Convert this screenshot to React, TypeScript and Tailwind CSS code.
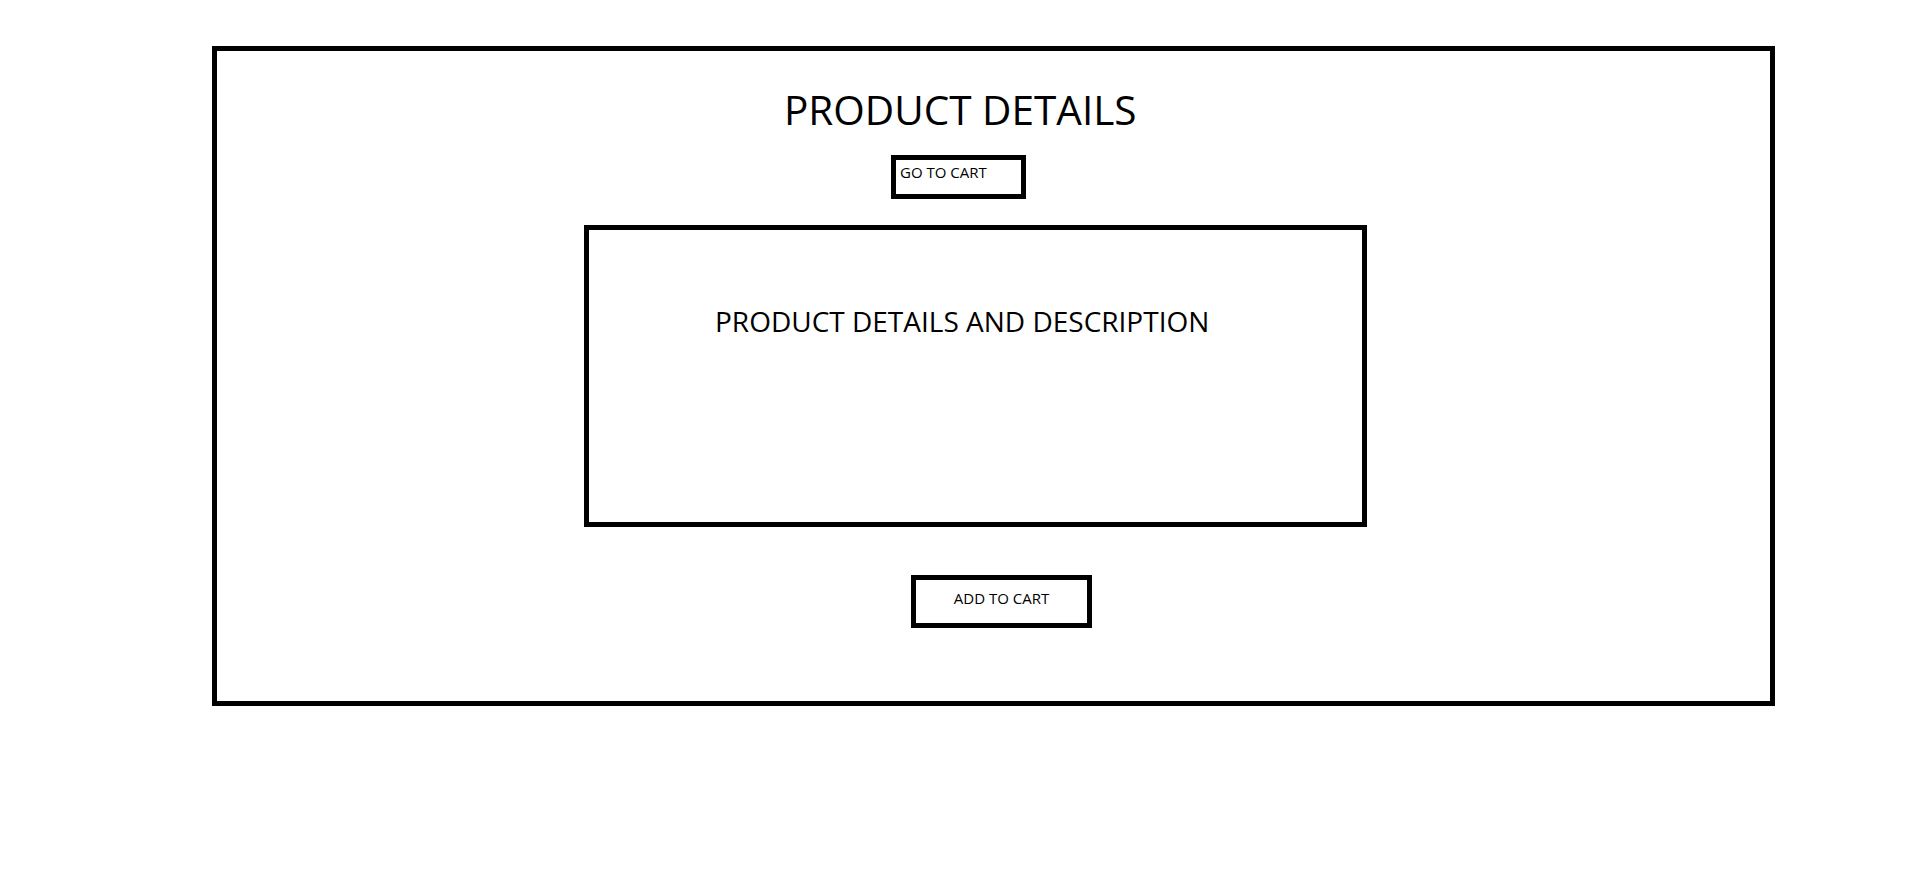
export default function App() {
  return (
    <div className="min-h-screen bg-white pl-[212px] pt-[46px] text-black [font-family:'Open_Sans',sans-serif]">
      <div className="flex w-[1563px] flex-col items-start border-[5px] border-black pb-[73px]">
        <h1 className="ml-[567px] mt-[39px] text-[40.5px] font-normal leading-none">PRODUCT DETAILS</h1>

        <button className="ml-[674px] mt-[24px] flex h-[44px] w-[135px] items-start border-[5px] border-black bg-white pl-[4px] pt-[5px] text-[15px] leading-none">
          GO TO CART
        </button>

        <div className="ml-[367px] mt-[26px] h-[302px] w-[783px] border-[5px] border-black pl-[126px] pt-[77px]">
          <p className="text-[28px] leading-none">PRODUCT DETAILS AND DESCRIPTION</p>
        </div>

        <button className="ml-[694px] mt-[48px] flex h-[53px] w-[181px] items-start justify-center border-[5px] border-black bg-white pt-[11px] text-[15px] leading-none">
          ADD TO CART
        </button>
      </div>
    </div>
  );
}
